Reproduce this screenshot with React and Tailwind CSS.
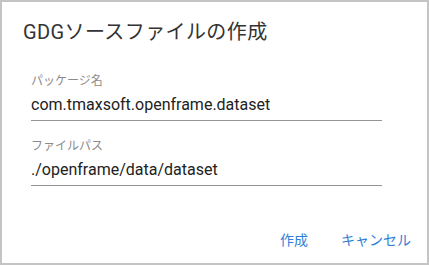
import React from "react";

const fields = [
  { label: "パッケージ名", value: "com.tmaxsoft.openframe.dataset" },
  { label: "ファイルパス", value: "./openframe/data/dataset" },
];

const Field = ({ label, value }) => (
  <div className="flex flex-col w-[351px]">
    <span className="text-[12px] leading-[16px] text-[#8a8a8a]">{label}</span>
    <div className="mt-[4px] pb-[3px] border-b border-[#949494] text-[16px] leading-[24px] text-[#222]">
      {value}
    </div>
  </div>
);

export default function App() {
  return (
    <div
      className="w-[429px] h-[265px] border-2 border-[#c4c4c4] bg-white flex flex-col"
      style={{ fontFamily: 'Roboto, "Noto Sans CJK JP", sans-serif' }}>
      <h2 className="pt-[16px] pl-[21px] text-[20px] leading-[28px] tracking-[0.4px] text-[#333]">
        GDGソースファイルの作成
      </h2>
      <div className="flex flex-col gap-[17px] pl-[29px] mt-[27px]">
        {fields.map((f) => (
          <Field key={f.label} label={f.label} value={f.value} />
        ))}
      </div>
      <div className="flex justify-end items-center mt-auto mb-[5px] pr-[8px]">
        <button className="px-2 py-2 text-[14px] leading-[20px] text-[#2f7fd8]">
          作成
        </button>
        <button className="ml-[17px] px-2 py-2 text-[14px] leading-[20px] text-[#2f7fd8]">
          キャンセル
        </button>
      </div>
    </div>
  );
}
